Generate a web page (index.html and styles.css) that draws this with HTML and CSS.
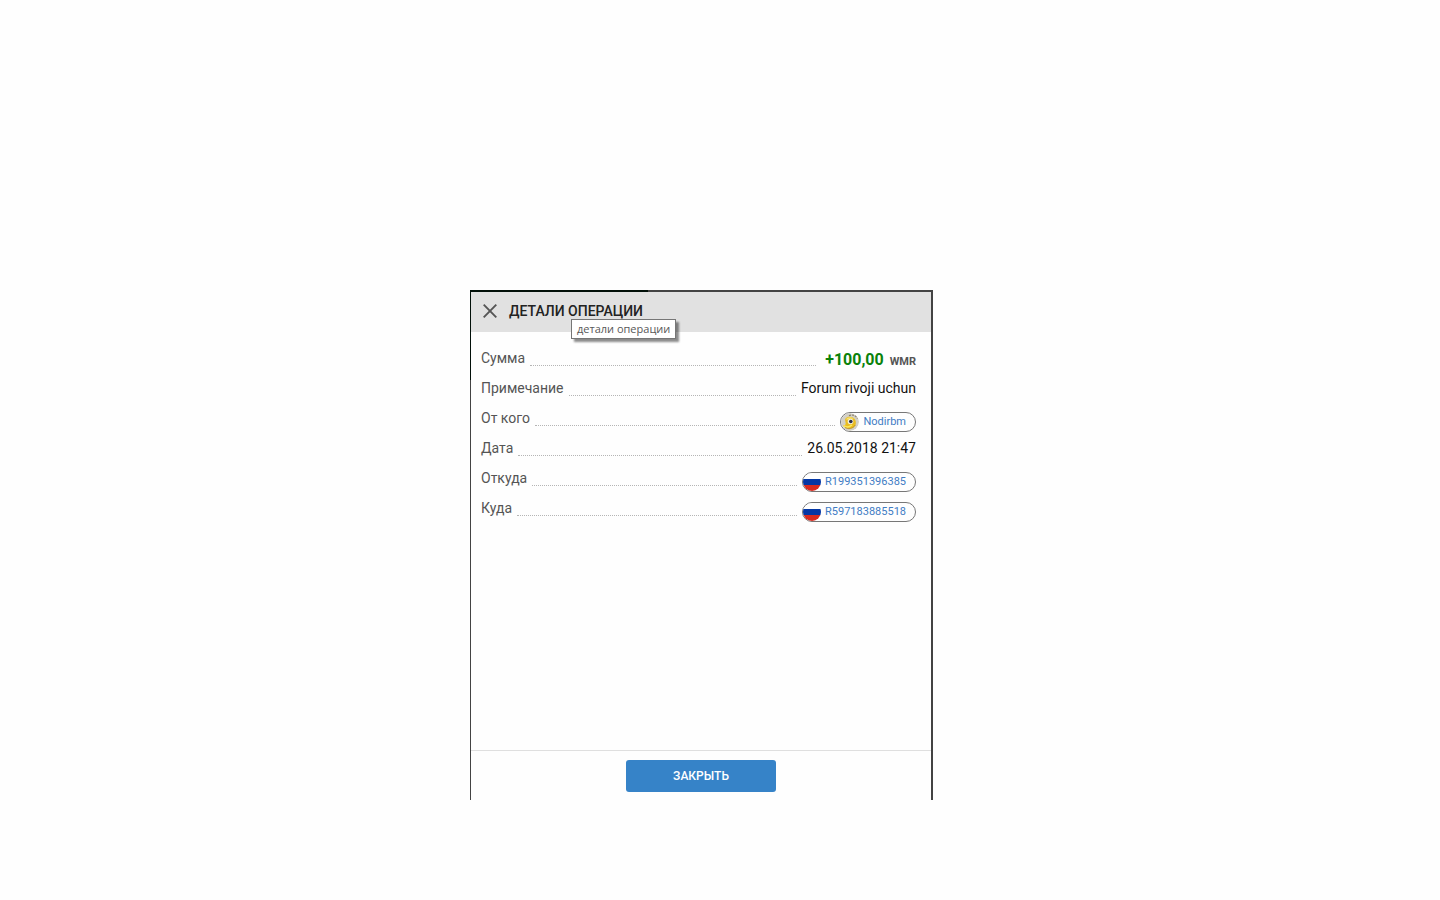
FILE: index.html
```html
<!DOCTYPE html>
<html lang="ru">
<head>
    <meta charset="UTF-8">
    <meta name="viewport" content="width=device-width, initial-scale=1.0">
    <title>Детали операции</title>
    <link rel="stylesheet" href="styles.css">
</head>
<body>
    <div class="dialog" role="dialog" aria-labelledby="dialog-title">
        <header class="dialog-header">
            <button class="close-icon" type="button" aria-label="Закрыть окно">
                <svg width="14" height="14" viewBox="0 0 14 14">
                    <path d="M0.7 0.7L13.3 13.3M13.3 0.7L0.7 13.3" fill="none" stroke="#555" stroke-width="1.9"/>
                </svg>
            </button>
            <h1 class="title" id="dialog-title">ДЕТАЛИ ОПЕРАЦИИ</h1>
            <div class="tooltip" role="tooltip">детали операции</div>
        </header>

        <dl class="details">
            <div class="row">
                <dt>Сумма</dt>
                <dd class="amount">+100,00 <span class="currency">WMR</span></dd>
            </div>
            <div class="row">
                <dt>Примечание</dt>
                <dd>Forum rivoji uchun</dd>
            </div>
            <div class="row">
                <dt>От кого</dt>
                <dd>
                    <a class="chip" href="#">
                        <svg class="chip-icon" width="18" height="18" viewBox="0 0 18 18">
                            <circle cx="9" cy="9" r="9" fill="#d3d0c5"/>
                            <path d="M4.500 5.500C6.500 3 12 3 14 6.500C16 10 14.500 14 11 15C7.500 16 4 15 2 12.500C4.500 12.500 5 11 4.500 9C4 7.500 4 6.500 4.500 5.500Z" fill="#e9bd22"/>
                            <path d="M5.500 5.500C8 3.500 11 4 13 6C10.500 5.500 8 5.500 5.500 7Z" fill="#f8e36d"/>
                            <path d="M2.500 12.700C5 14.500 8.500 14 11 12" fill="none" stroke="#fbe75c" stroke-width="1.500"/>
                            <path d="M4 14.500C7 16.500 12 16 14.300 12" fill="none" stroke="#b98a18" stroke-width="0.800"/>
                            <circle cx="9.500" cy="8.500" r="2.800" fill="#f4f1dc"/>
                            <circle cx="9.800" cy="8.500" r="1.800" fill="#2c2f4c"/>
                            <path d="M8 2.800C11 1 15 2.500 16.500 5.500" fill="none" stroke="#8d806b" stroke-width="1.200" stroke-dasharray="2 1"/>
                        </svg>
                        <span>Nodirbm</span>
                    </a>
                </dd>
            </div>
            <div class="row">
                <dt>Дата</dt>
                <dd>26.05.2018 21:47</dd>
            </div>
            <div class="row">
                <dt>Откуда</dt>
                <dd>
                    <a class="chip" href="#">
                        <span class="chip-icon flag"></span>
                        <span>R199351396385</span>
                    </a>
                </dd>
            </div>
            <div class="row">
                <dt>Куда</dt>
                <dd>
                    <a class="chip" href="#">
                        <span class="chip-icon flag"></span>
                        <span>R597183885518</span>
                    </a>
                </dd>
            </div>
        </dl>

        <footer class="dialog-footer">
            <button class="close-button" type="button">ЗАКРЫТЬ</button>
        </footer>
    </div>
</body>
</html>
```

FILE: styles.css
```css
* {
    box-sizing: border-box;
}

body {
    margin: 0;
    padding: 290px 37px 100px 0;
    display: flex;
    justify-content: center;
    background: #fefefe;
    font-family: Roboto, "Noto Sans", sans-serif;
    font-size: 14px;
    line-height: 20px;
}

/* the frame is darker near the top left corner */
.dialog {
    display: flex;
    flex-direction: column;
    width: 100%;
    max-width: 463px;
    min-height: 510px;
    padding: 2px 2px 0 1px;
    background:
        linear-gradient(#021009, #021009) 0 0 / 178px 2px no-repeat,
        linear-gradient(#021009, #021009) 0 0 / 1px 90px no-repeat,
        #434343;
}

.dialog-header {
    position: relative;
    display: flex;
    align-items: center;
    gap: 12px;
    height: 40px;
    padding: 0 12px 2px;
    background: #e1e1e1;
}

.close-icon {
    display: flex;
    padding: 0;
    border: none;
    background: none;
    cursor: pointer;
}

.title {
    margin: 0;
    color: #222;
    font-size: 14px;
    font-weight: 500;
}

.tooltip {
    position: absolute;
    top: 27px;
    left: 100px;
    padding: 0 5px;
    border: 1px solid #767676;
    background: #fff;
    box-shadow: 3px 3px 2px rgba(0, 0, 0, 0.45);
    color: #575757;
    font-family: "Open Sans", sans-serif;
    font-size: 11px;
    line-height: 18px;
    white-space: nowrap;
}

.details {
    flex: 1;
    margin: 0;
    padding: 12px 15px 12px 10px;
    background: #fefefe;
}

.row {
    display: flex;
    height: 30px;
    padding-top: 4px;
}

.row dt {
    display: flex;
    flex: 1;
    color: #555;
}

/* dotted leader between label and value */
.row dt::after {
    content: "";
    flex: 1;
    height: 17px;
    margin: 0 5px;
    border-bottom: 1px dotted #b5b5b5;
}

.row dd {
    margin: 0;
    color: #111;
}

.row .amount {
    padding-left: 4px;
    color: #0a820a;
    font-size: 16px;
    font-weight: 700;
    line-height: 24px;
}

.currency {
    margin-left: 2px;
    color: #555;
    font-size: 11px;
}

.chip {
    display: flex;
    align-items: center;
    gap: 4px;
    height: 20px;
    margin-top: 4px;
    padding-right: 9px;
    border: 1px solid #777;
    border-radius: 10px;
    color: #3f7cc4;
    font-size: 11px;
    text-decoration: none;
}

.chip-icon {
    flex: none;
    width: 18px;
    height: 18px;
    border-radius: 50%;
}

.flag {
    background: linear-gradient(#fff 6px, #0437a5 6px 12px, #d82b1f 12px);
}

.dialog-footer {
    display: flex;
    justify-content: center;
    padding: 9px 0 8px;
    border-top: 1px solid #dfdfdf;
    background: #fefefe;
}

.close-button {
    width: 150px;
    height: 32px;
    border: none;
    border-radius: 3px;
    background: #3683c8;
    color: #fff;
    font-family: inherit;
    font-size: 12px;
    font-weight: 500;
    cursor: pointer;
}
```
